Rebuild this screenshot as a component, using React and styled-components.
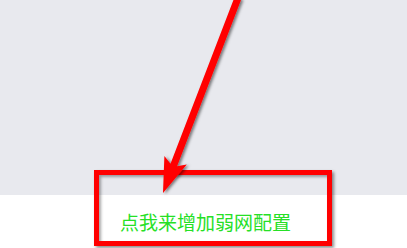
import React from 'react';
import styled, { createGlobalStyle } from 'styled-components';

const GlobalStyle = createGlobalStyle`
  html, body {
    margin: 0;
    padding: 0;
    background: #ffffff;
  }
  body {
    font-family: "Noto Sans CJK SC", "Noto Sans", sans-serif;
  }
`;

const Page = styled.div`
  position: relative;
  width: 407px;
  height: 248px;
  display: flex;
  flex-direction: column;
  overflow: hidden;
`;

const TopArea = styled.div`
  height: 195px;
  background: #e8e9ee;
`;

const BottomArea = styled.div`
  flex: 1;
  background: #ffffff;
  display: flex;
  align-items: center;
  justify-content: center;
`;

const ConfigLink = styled.span`
  font-size: 19px;
  line-height: 1;
  color: #26e026;
  letter-spacing: 0;
  cursor: pointer;
  transform: translateX(2px);
`;

// annotation overlays drawn on top of the screenshot
const HighlightBox = styled.div`
  position: absolute;
  left: ${p => p.x}px;
  top: ${p => p.y}px;
  width: ${p => p.w}px;
  height: ${p => p.h}px;
  box-sizing: border-box;
  border: 5px solid #ff0000;
  box-shadow: 2px 2px 3px rgba(0, 0, 0, 0.45), inset 2px 2px 3px rgba(0, 0, 0, 0.35);
  pointer-events: none;
`;

const ArrowLayer = styled.svg`
  position: absolute;
  left: 0;
  top: 0;
  pointer-events: none;
`;

function Arrow() {
  return (
    <ArrowLayer width="407" height="248" viewBox="0 0 407 248">
      <defs>
        <filter id="arrowShadow" x="-20%" y="-20%" width="140%" height="140%">
          <feDropShadow dx="2" dy="1" stdDeviation="1.4" floodColor="#000" floodOpacity="0.5" />
        </filter>
      </defs>
      <polygon
        points="234.7,-3.3 170.5,163.7 164.4,156 163,193 186.8,164.6 177.1,166.3 241.3,-0.7"
        fill="#ff0000"
        filter="url(#arrowShadow)"
      />
    </ArrowLayer>
  );
}

export default function App() {
  return (
    <>
      <GlobalStyle />
      <Page>
        <TopArea />
        <BottomArea>
          <ConfigLink>点我来增加弱网配置</ConfigLink>
        </BottomArea>
        <HighlightBox x={94} y={170} w={238} h={76} />
        <Arrow />
      </Page>
    </>
  );
}
